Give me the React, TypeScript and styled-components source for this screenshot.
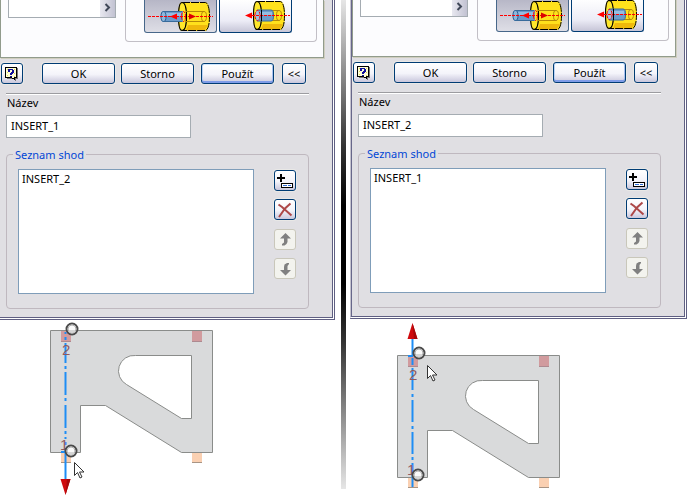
import React from "react";
import styled, { createGlobalStyle, css } from "styled-components";

const GlobalStyle = createGlobalStyle`
  *, *::before, *::after { box-sizing: border-box; }
  body {
    margin: 0;
    background: #fff;
    color: #000;
    font-family: "Noto Sans", "DejaVu Sans", sans-serif;
    font-size: 11px;
    line-height: 14px;
  }
  button, input, select { font: inherit; color: inherit; margin: 0; }
`;

const Page = styled.main`
  display: grid;
  grid-template-columns: minmax(0, 1fr) 5px minmax(0, 1fr);
  padding-right: 2px;
`;

const Column = styled.section`
  min-width: 0;
  &:first-child { margin-right: 6px; }
  &:last-child { margin-left: 4px; }
`;

const Divider = styled.div`
  margin-bottom: 10px;
  background: linear-gradient(#e6e6e6 0%, #333 30%, #000 42%, #000 58%, #333 70%, #e6e6e6 100%);
`;

const Dialog = styled.form<{ $framed?: boolean }>`
  overflow: hidden;
  margin: 0;
  background: #e0dfe3 padding-box;
  border: 0 double #5f5f82;
  border-right-width: 3px;
  border-bottom-width: 3px;
  padding-bottom: 8px;
  ${(p) =>
    p.$framed &&
    css`
      border-left: 1px solid #c4c2ce;
      box-shadow: inset 1px 0 #67678a;
      padding-left: 1px;
    `}
`;

const TabPane = styled.div<{ $raised?: boolean }>`
  display: flex;
  align-items: flex-start;
  gap: 9px;
  margin-right: 8px;
  margin-top: ${(p) => (p.$raised ? "-1px" : "0")};
  padding: 0 6px 15px 7px;
  background: #fcfcfe;
  border: 1px solid #919b8c;
  border-top: 0;
  box-shadow: 1px 1px #d0cebf;
`;

const Picker = styled.div`
  display: flex;
  justify-content: flex-end;
  width: 108px;
  height: 18px;
  flex: none;
  background: #fff;
  border: 1px solid #a5acb2;
  border-top: 0;
`;

const PickerButton = styled.button`
  display: flex;
  align-items: center;
  justify-content: center;
  width: 15px;
  padding: 0 0 3px;
  border: 0;
  background: linear-gradient(90deg, #e8e8f0, #c2c2d2);
`;

const SolutionGroup = styled.div`
  display: flex;
  gap: 2px;
  flex: 1;
  min-width: 0;
  height: 42px;
  padding-left: 18px;
  border: 1px solid #c2bfc6;
  border-top: 0;
  border-radius: 0 0 4px 4px;
`;

const SolutionButton = styled.button<{ $pressed?: boolean }>`
  width: 73px;
  height: 33px;
  flex: none;
  padding: 0;
  border: 1px solid #003c74;
  border-top: 0;
  border-radius: 0 0 3px 3px;
  background: linear-gradient(#fff, #ececf6 65%, #c6c5d7);
  ${(p) =>
    p.$pressed &&
    css`
      border-color: #47678a;
      background: linear-gradient(#b6b6c6, #cfcfda 60%, #dedee6);
    `}
  svg { display: block; }
`;

const ButtonRow = styled.div`
  display: flex;
  align-items: center;
  padding: 5px 0 0 1px;
`;

const PushButton = styled.button<{ $size: "small" | "medium" | "large"; $default?: boolean; $before?: number }>`
  display: flex;
  align-items: center;
  justify-content: center;
  flex: none;
  width: ${(p) => ({ small: 22, medium: 24, large: 73 })[p.$size]}px;
  height: 21px;
  margin-left: ${(p) => p.$before ?? 0}px;
  padding: 0;
  border: 1px solid #003c74;
  border-radius: 3px;
  background: linear-gradient(#fff, #f4f4fa 55%, #c9c7dc);
  box-shadow: 0 0 0 1px #e9e8e6;
  ${(p) =>
    p.$default &&
    css`
      box-shadow: 0 0 0 1px #e9e8e6, inset 0 1px #cee7ff, inset 0 -2px #7f9ce8, inset 1px 0 #bcd4f6, inset -1px 0 #a9c2f0;
    `}
  &:disabled {
    border-color: #c9c7ba;
    background: #f3f3ee;
    box-shadow: none;
  }
`;

const Rule = styled.hr`
  height: 2px;
  margin: 9px 23px 0 6px;
  border: 0;
  border-top: 1px solid #9c9ca0;
  border-bottom: 1px solid #fff;
`;

const NameField = styled.div`
  display: flex;
  flex-direction: column;
  align-items: flex-start;
  gap: 5px;
  padding: 1px 6px 0;
`;

const NameLabel = styled.label`
  padding-left: 1px;
`;

const NameInput = styled.input`
  width: 185px;
  height: 23px;
  padding: 0 4px 2px;
  border: 1px solid #a5acb2;
  border-radius: 0;
  background: #fff;
  outline: 0;
`;

const MateGroup = styled.fieldset`
  display: flex;
  align-items: flex-start;
  gap: 20px;
  min-width: 0;
  margin: 8px 23px 0 6px;
  padding: 7px 12px 14px 11px;
  border: 1px solid #bfb8bf;
  border-radius: 4px;
`;

const MateLegend = styled.legend`
  margin-left: -5px;
  padding: 2px 2px 0;
  color: #0046d5;
`;

const MateList = styled.select`
  appearance: none;
  flex: 1;
  min-width: 0;
  height: 125px;
  padding: 1px;
  border: 1px solid #7f9db9;
  border-radius: 0;
  background: #fff;
  outline: 0;
  overflow: hidden;
`;

const Tools = styled.div`
  display: grid;
  gap: 9px;
  padding-top: 1px;
`;

const ToolPair = styled.div`
  display: grid;
  gap: 8px;
`;

const Drawing = styled.svg`
  display: block;
  overflow: visible;
`;

function HelpIcon() {
  return (
    <svg width="16" height="16" viewBox="0 0 16 16" shapeRendering="crispEdges">
      <path d="M3 2h11v11h-2v2l-3-2H3z" fill="#777" />
      <path d="M1.500 1.500h11v10h-2v2l-3-2h-6z" fill="#ffffd8" stroke="#000" />
      <path d="M3 3h1v1H3zm0 3h1v1H3zm0 3h1v1H3zm7-6h1v1h-1zm0 4h1v1h-1zm0 3h1v1h-1z" fill="#e6dc52" />
      <path d="M4 3h5v1h1v3H9v1H8v1H6V7h1V6h1V4H6v2H4zM6 10h2v1H6z" fill="#10109c" />
    </svg>
  );
}

function ChevronIcon() {
  return (
    <svg width="9" height="9" viewBox="0 0 9 9">
      <path d="M2.500 1 6 4.500 2.500 8" fill="none" stroke="#404858" strokeWidth="2" />
    </svg>
  );
}

function AddIcon() {
  return (
    <svg width="20" height="19" viewBox="0 0 20 19" shapeRendering="crispEdges">
      <path d="M5 3h2v3h3v2H7v3H5V8H2V6h3z" fill="#000" />
      <rect x="6.500" y="12.500" width="11" height="4" fill="#fff" stroke="#000" />
      <path d="M8 14h4v1H8zm5 0h3v1h-3z" fill="#316ed8" />
    </svg>
  );
}

function DeleteIcon() {
  return (
    <svg width="20" height="19" viewBox="0 0 20 19">
      <path d="M3.500 4.500 7 7 16.500 15.500M15.500 3.500 10 8.500 4 17" fill="none" stroke="#ad4848" strokeWidth="2" />
    </svg>
  );
}

function UpIcon() {
  return (
    <svg width="20" height="19" viewBox="0 0 20 19">
      <path d="M10.500 3 16 8.500h-3.500V12l-1 2-2 1.500H7V14l2-1.500v-4H5z" fill="#808080" />
    </svg>
  );
}

function DownIcon() {
  return (
    <svg width="20" height="19" viewBox="0 0 20 19">
      <path d="M10.500 16.500 16 11h-3.500V7l1.500-2V4h-2L9.500 5.500 9 8v3H5z" fill="#808080" />
    </svg>
  );
}

function OpposedIcon() {
  return (
    <svg width="71" height="32" viewBox="0 0 71 32">
      <path d="M37 2h23c3 0 5 6 5 14.500S63 31 60 31H37c-2.500 0-4-6-4-14.500S34.500 2 37 2z" fill="#ffe11c" />
      <path d="M43 25h20l-3 5H41z" fill="#efb90c" />
      <path d="M37 2.500h23c3 0 4.500 6 4.500 14S63 30.500 60 30.500H37" fill="none" stroke="#000" strokeDasharray="8 1" />
      <path d="M37 2.500c3 0 4.500 6 4.500 14s-1.500 14-4.500 14-3.500-6-3.500-14 1-14 3.500-14z" fill="#ffe82b" stroke="#000" strokeWidth="1.200" />
      <path d="M41 11.500h18c2 0 2.500 2 2.500 5s-1 5-2.500 5H41M59 11.500c-2 0-2.500 2-2.500 5s.5 5 2.500 5" fill="none" stroke="#b48908" />
      <path d="M18 11h20v11H18c-3 0-3-11 0-11z" fill="#6b9bcb" />
      <path d="M19 13h18v3H19z" fill="#94bde2" />
      <ellipse cx="18.500" cy="16.500" rx="2.500" ry="5" fill="#8fb7dc" stroke="#275d91" />
      <path d="M18 11.500h19M18 21.500h19" stroke="#386b9b" />
      <path d="M3 16.500h65" stroke="#f00" strokeDasharray="3 1" />
      <ellipse cx="38.500" cy="16.500" rx="2" ry="5" fill="none" stroke="#f00" strokeDasharray="3 1" />
      <path d="M25 16.500 32 13.500v6z" fill="#f00" />
      <path d="M51 16.500 44 13.500v6z" fill="#d00" />
      <path d="M41.500 12v9" stroke="#000" />
    </svg>
  );
}

function AlignedIcon() {
  return (
    <svg width="71" height="32" viewBox="0 0 71 32">
      <path d="M37 1h23c3 0 5 6 5 14.500S63 30 60 30H37c-2.500 0-4-6-4-14.500S34.500 1 37 1z" fill="#ffe11c" />
      <path d="M43 24h20l-3 5H41z" fill="#efb90c" />
      <path d="M37 1.500h23c3 0 4.500 6 4.500 14S63 29.500 60 29.500H37" fill="none" stroke="#000" strokeDasharray="8 1" />
      <path d="M37 1.500c3 0 4.500 6 4.500 14s-1.500 14-4.500 14-3.500-6-3.500-14 1-14 3.500-14z" fill="#ffe82b" stroke="#000" strokeWidth="1.200" />
      <path d="M51 10.500h8c2 0 2.500 2 2.500 5s-1 5-2.500 5h-8M59 10.500c-2 0-2.500 2-2.500 5s.5 5 2.500 5" fill="none" stroke="#b48908" />
      <path d="M37 10h14c2 0 2.500 2 2.500 5.500S53 21 51 21H37z" fill="#6b9bcb" stroke="#386b9b" />
      <path d="M38 12h14v3H38z" fill="#94bde2" />
      <ellipse cx="37.500" cy="15.500" rx="2.500" ry="5" fill="#9bc3e2" stroke="#f00" strokeDasharray="3 1" />
      <path d="M32 15.500h38" stroke="#f00" strokeDasharray="3 1" />
      <path d="M25 15.500 32 12.500v6z" fill="#f00" />
      <path d="M41.500 10v11" stroke="#000" />
    </svg>
  );
}

function Pin({ x, y }: { x: number; y: number }) {
  return (
    <g>
      <circle cx={x} cy={y} r="5.500" fill="#fff" stroke="#4a4a4a" strokeWidth="2" />
      <circle cx={x} cy={y} r="4" fill="#fafafa" stroke="#b0b0b0" strokeWidth="1" />
      <path d={`M${x - 3} ${y + 1}h6a3 3 0 0 1-6 0z`} fill="#d6d6d6" />
    </g>
  );
}

function Pointer({ x, y }: { x: number; y: number }) {
  return (
    <path
      transform={`translate(${x} ${y})`}
      d="M.5.500v13l3-3 2.500 5.500 2-1-2.500-5H10z"
      fill="#fff"
      stroke="#333"
    />
  );
}

function Plate() {
  return (
    <g>
      <path d="M11 122h10v11H11zM142 122h10v11h-10z" fill="#fad0b2" />
      <path d="M11 132.500h10M142 132.500h10" stroke="#a89484" />
      <path
        fillRule="evenodd"
        d="M.5.500h162v122h-31l-76-47h-25v47H.5zM141.500 25.500H85.500a15.500 15.500 0 0 0-9 29l55 34h10z"
        fill="#d9dadb"
        stroke="#8a8c8a"
      />
      <path d="M11 1h10v10H11zM142 1h10v10h-10z" fill="#d19b9e" />
      <path d="M11 11.500h10M142 11.500h10" stroke="#ad8a90" />
    </g>
  );
}

const MarkText = styled.text`
  font-family: "Liberation Sans", sans-serif;
  font-size: 15px;
  fill: #8f5a60;
`;

function BracketDown() {
  return (
    <Drawing width="230" height="179" viewBox="0 0 230 179" role="img" aria-label="1 2">
      <g transform="translate(50 10)"><Plate /></g>
      <path d="M65.500 12v121" stroke="#1e8df5" strokeWidth="2" strokeDasharray="2 3 3 3 20 3 3 3 23 3 3 4 23 3 3 3" />
      <path d="M65.500 131v30M61 132h5" stroke="#1e8df5" strokeWidth="2" />
      <MarkText x="62" y="35">2</MarkText>
      <MarkText x="60" y="130">1</MarkText>
      <path d="M60.500 159h10L65.500 175z" fill="#cf0a0e" />
      <path d="M67 159h3.500L65.500 175z" fill="#a5080b" />
      <Pin x={72} y={9} />
      <Pin x={71} y={131} />
      <Pointer x={74} y={142} />
    </Drawing>
  );
}

function BracketUp() {
  return (
    <Drawing width="230" height="179" viewBox="0 0 230 179" role="img" aria-label="1 2">
      <g transform="translate(47 36)"><Plate /></g>
      <path d="M62.500 168V39" stroke="#1e8df5" strokeWidth="2" strokeDasharray="24 3 3 3 22 3 3 4 22 3 3 4 22 3" />
      <path d="M62.500 37V18M58 37h5" stroke="#1e8df5" strokeWidth="2" />
      <MarkText x="59" y="61">2</MarkText>
      <MarkText x="57" y="156">1</MarkText>
      <path d="M57.500 20h10L62.500 4z" fill="#cf0a0e" />
      <path d="M64 20h3.500L62.500 4z" fill="#a5080b" />
      <Pin x={69} y={34} />
      <Pin x={68} y={156} />
      <Pointer x={77} y={46} />
    </Drawing>
  );
}

function MateDialog({ id, name, other, framed }: { id: string; name: string; other: string; framed?: boolean }) {
  return (
    <Dialog $framed={framed} onSubmit={(e) => e.preventDefault()}>
      <TabPane $raised={framed}>
        <Picker>
          <PickerButton type="button" aria-label="›"><ChevronIcon /></PickerButton>
        </Picker>
        <SolutionGroup>
          <SolutionButton type="button" $pressed aria-pressed="true"><OpposedIcon /></SolutionButton>
          <SolutionButton type="button" aria-pressed="false"><AlignedIcon /></SolutionButton>
        </SolutionGroup>
      </TabPane>
      <ButtonRow>
        <PushButton type="button" $size="small" aria-label="?"><HelpIcon /></PushButton>
        <PushButton type="submit" $size="large" $before={19}>OK</PushButton>
        <PushButton type="button" $size="large" $before={6}>Storno</PushButton>
        <PushButton type="button" $size="large" $before={7} $default>Použít</PushButton>
        <PushButton type="button" $size="medium" $before={8}>&lt;&lt;</PushButton>
      </ButtonRow>
      <Rule />
      <NameField>
        <NameLabel htmlFor={`${id}-name`}>Název</NameLabel>
        <NameInput id={`${id}-name`} type="text" defaultValue={name} />
      </NameField>
      <MateGroup>
        <MateLegend>Seznam shod</MateLegend>
        <MateList size={8} aria-label="Seznam shod">
          <option>{other}</option>
        </MateList>
        <Tools>
          <ToolPair>
            <PushButton type="button" $size="small" aria-label="+"><AddIcon /></PushButton>
            <PushButton type="button" $size="small" aria-label="×"><DeleteIcon /></PushButton>
          </ToolPair>
          <ToolPair>
            <PushButton type="button" $size="small" disabled aria-label="↑"><UpIcon /></PushButton>
            <PushButton type="button" $size="small" disabled aria-label="↓"><DownIcon /></PushButton>
          </ToolPair>
        </Tools>
      </MateGroup>
    </Dialog>
  );
}

export default function App() {
  return (
    <>
      <GlobalStyle />
      <Page>
        <Column>
          <MateDialog id="first" name="INSERT_1" other="INSERT_2" />
          <BracketDown />
        </Column>
        <Divider />
        <Column>
          <MateDialog id="second" name="INSERT_2" other="INSERT_1" framed />
          <BracketUp />
        </Column>
      </Page>
    </>
  );
}
